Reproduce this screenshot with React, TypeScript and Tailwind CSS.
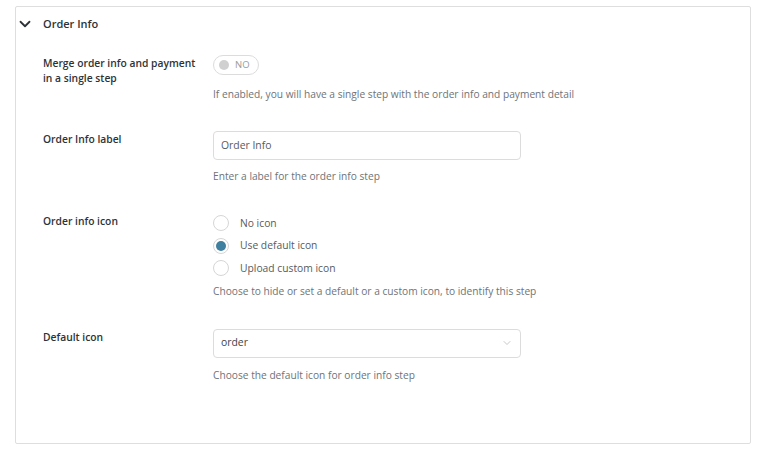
import { ChevronDown } from "lucide-react";

const FONT = { fontFamily: '"Open Sans", "Noto Sans", sans-serif' };

function Label({ children }: { children: React.ReactNode }) {
  return (
    <div className="w-[170px] shrink-0 whitespace-nowrap text-[10.3px] leading-[15px] font-semibold text-[#2c3338]">
      {children}
    </div>
  );
}

function Help({ children }: { children: React.ReactNode }) {
  return <p className="text-[10.2px] leading-4 text-[#6e7378]">{children}</p>;
}

function Radio({ checked, label }: { checked?: boolean; label: string }) {
  return (
    <label className="h-[22.5px] flex items-center gap-[11px] text-[10.3px] text-[#555b60]">
      <span className="w-[16px] h-[16px] rounded-full border border-[#d6d6d6] bg-white flex items-center justify-center">
        {checked && <span className="w-[10px] h-[10px] rounded-full bg-[#3f7f9f]" />}
      </span>
      {label}
    </label>
  );
}

export default function App() {
  return (
    <div className="min-h-[452px] bg-white pt-[6px] pl-[15px]" style={FONT}>
      <div className="w-[736px] h-[438px] border border-[#dedede] rounded-[2px] bg-white">
        <div className="h-[34px] flex items-center gap-[9px] text-[#2c3338]">
          <ChevronDown size={18} strokeWidth={2.4} className="shrink-0" />
          <span className="text-[11px] font-semibold">Order Info</span>
        </div>

        <div className="pl-[27px]">
          <div className="flex mt-[14px]">
            <Label>
              <div className="mt-[1px]">
                Merge order info and payment
                <br />
                in a single step
              </div>
            </Label>
            <div>
              <div className="w-[46px] h-[20px] rounded-full border border-[#dcdcdc] flex items-center pl-[5px] gap-[6px]">
                <span className="w-[10px] h-[10px] rounded-full bg-[#d0d0d0]" />
                <span className="text-[9.5px] text-[#9a9a9a]">NO</span>
              </div>
              <div className="mt-[11px]">
                <Help>If enabled, you will have a single step with the order info and payment detail</Help>
              </div>
            </div>
          </div>

          <div className="flex mt-[29px]">
            <Label>
              <div className="leading-4">Order Info label</div>
            </Label>
            <div>
              <div className="w-[308px] h-[29px] rounded-[4px] border border-[#dcdcdc] flex items-center px-[7px] text-[10.4px] text-[#555b60]">
                Order Info
              </div>
              <div className="mt-[8px]">
                <Help>Enter a label for the order info step</Help>
              </div>
            </div>
          </div>

          <div className="flex mt-[28px]">
            <Label>
              <div className="leading-4 mt-[1px]">Order info icon</div>
            </Label>
            <div>
              <Radio label="No icon" />
              <Radio checked label="Use default icon" />
              <Radio label="Upload custom icon" />
              <div className="mt-[3px]">
                <Help>Choose to hide or set a default or a custom icon, to identify this step</Help>
              </div>
            </div>
          </div>

          <div className="flex mt-[30px]">
            <Label>
              <div className="leading-4">Default icon</div>
            </Label>
            <div>
              <div className="w-[308px] h-[29px] rounded-[4px] border border-[#dcdcdc] flex items-center justify-between pl-[7px] pr-[7px] text-[10.4px] text-[#3c434a]">
                order
                <ChevronDown size={12} strokeWidth={1.5} className="text-[#b5b5b5]" />
              </div>
              <div className="mt-[9px]">
                <Help>Choose the default icon for order info step</Help>
              </div>
            </div>
          </div>
        </div>
      </div>
    </div>
  );
}
